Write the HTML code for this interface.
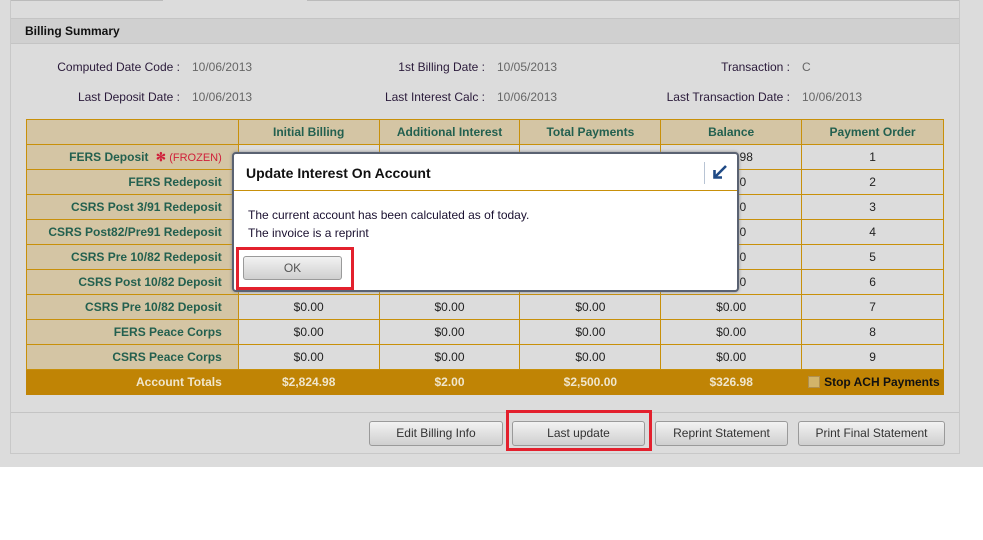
<!DOCTYPE html>
<html><head><style>
*{margin:0;padding:0;box-sizing:border-box}
body{width:983px;height:540px;background:#fff;font-family:"Liberation Sans",Arial,sans-serif;font-size:12px;position:relative;overflow:hidden}
.bg{position:absolute;left:0;top:0;width:983px;height:467px;background:#dcdcdc}
.panel{position:absolute;left:10px;top:0;width:950px;height:454px;border:1px solid #c8c8c8;border-top:none}
.a{position:absolute;white-space:nowrap}
.lbl{color:#2a1a3a;text-align:right}
.val{color:#666}
table{position:absolute;left:26px;top:119px;border-collapse:collapse;width:918px}
td{border:1px solid #c8900a;height:25px;text-align:center;color:#222;font-size:12px;padding:0}
tr.h td{background:#d4c5a4;color:#23604f;font-weight:bold}
td.n{background:#d4c5a4;color:#23604f;font-weight:bold;text-align:right;padding-right:16px}
tr.t td{background:#c08405;color:#f0e6cc;font-weight:bold;border-color:#c08405}
.btn{position:absolute;top:421px;height:25px;border:1px solid #9a9a9a;border-radius:3px;background:linear-gradient(#f2f2f2,#cfcfcf);color:#333;font-size:12px;text-align:center;line-height:23px}
.red{position:absolute;border:3px solid #e3202d}
</style></head><body>
<div class="bg"></div>
<div style="position:absolute;left:10px;top:0;width:153px;height:1px;background:#bbb"></div>
<div style="position:absolute;left:307px;top:0;width:653px;height:1px;background:#bbb"></div>
<div class="panel"></div>
<div style="position:absolute;left:11px;top:18px;width:948px;height:26px;background:#d0d0d0;border-top:1px solid #c4c4c4;border-bottom:1px solid #c4c4c4"></div>
<div class="a" style="left:25px;top:24px;font-weight:bold;color:#111">Billing Summary</div>

<div class="a lbl" style="right:803px;top:60px">Computed Date Code :</div>
<div class="a val" style="left:192px;top:60px">10/06/2013</div>
<div class="a lbl" style="right:498px;top:60px">1st Billing Date :</div>
<div class="a val" style="left:497px;top:60px">10/05/2013</div>
<div class="a lbl" style="right:193px;top:60px">Transaction :</div>
<div class="a val" style="left:802px;top:60px">C</div>
<div class="a lbl" style="right:803px;top:90px">Last Deposit Date :</div>
<div class="a val" style="left:192px;top:90px">10/06/2013</div>
<div class="a lbl" style="right:498px;top:90px">Last Interest Calc :</div>
<div class="a val" style="left:497px;top:90px">10/06/2013</div>
<div class="a lbl" style="right:193px;top:90px">Last Transaction Date :</div>
<div class="a val" style="left:802px;top:90px">10/06/2013</div>

<table>
<colgroup><col style="width:212px"><col style="width:141px"><col style="width:141px"><col style="width:141px"><col style="width:141px"><col style="width:142px"></colgroup>
<tr class="h"><td></td><td>Initial Billing</td><td>Additional Interest</td><td>Total Payments</td><td>Balance</td><td>Payment Order</td></tr>
<tr><td class="n">FERS Deposit <span style="color:#d0203a;font-weight:bold;margin-left:4px">✻</span> <span style="color:#d0203a;font-size:11px;font-weight:normal">(FROZEN)</span></td><td>$2,824.98</td><td>$2.00</td><td>$2,500.00</td><td>$326.98</td><td>1</td></tr>
<tr><td class="n">FERS Redeposit</td><td>$0.00</td><td>$0.00</td><td>$0.00</td><td>$0.00</td><td>2</td></tr>
<tr><td class="n">CSRS Post 3/91 Redeposit</td><td>$0.00</td><td>$0.00</td><td>$0.00</td><td>$0.00</td><td>3</td></tr>
<tr><td class="n">CSRS Post82/Pre91 Redeposit</td><td>$0.00</td><td>$0.00</td><td>$0.00</td><td>$0.00</td><td>4</td></tr>
<tr><td class="n">CSRS Pre 10/82 Redeposit</td><td>$0.00</td><td>$0.00</td><td>$0.00</td><td>$0.00</td><td>5</td></tr>
<tr><td class="n">CSRS Post 10/82 Deposit</td><td>$0.00</td><td>$0.00</td><td>$0.00</td><td>$0.00</td><td>6</td></tr>
<tr><td class="n">CSRS Pre 10/82 Deposit</td><td>$0.00</td><td>$0.00</td><td>$0.00</td><td>$0.00</td><td>7</td></tr>
<tr><td class="n">FERS Peace Corps</td><td>$0.00</td><td>$0.00</td><td>$0.00</td><td>$0.00</td><td>8</td></tr>
<tr><td class="n">CSRS Peace Corps</td><td>$0.00</td><td>$0.00</td><td>$0.00</td><td>$0.00</td><td>9</td></tr>
<tr class="t"><td style="text-align:right;padding-right:16px">Account Totals</td><td>$2,824.98</td><td>$2.00</td><td>$2,500.00</td><td>$326.98</td><td style="text-align:left;padding-left:6px;color:#111"><span style="display:inline-block;width:12px;height:12px;background:#d2b46a;border:1px solid #b09050;vertical-align:-2px;margin-right:4px"></span>Stop ACH Payments</td></tr>
</table>

<div style="position:absolute;left:11px;top:412px;width:948px;height:1px;background:#c4c4c4"></div>
<div class="btn" style="left:369px;width:134px">Edit Billing Info</div>
<div class="btn" style="left:512px;width:133px">Last update</div>
<div class="btn" style="left:655px;width:133px">Reprint Statement</div>
<div class="btn" style="left:798px;width:147px">Print Final Statement</div>
<div class="red" style="left:506px;top:410px;width:146px;height:41px"></div>

<div style="position:absolute;left:232px;top:152px;width:507px;height:140px;background:#fff;border:2px solid #5a6272;border-radius:4px;box-shadow:0 0 3px #888">
  <div style="position:absolute;left:0;top:36px;width:503px;height:1px;background:#c8900a"></div>
  <div class="a" style="left:12px;top:11px;font-size:14px;font-weight:bold;color:#111">Update Interest On Account</div>
  <div style="position:absolute;left:470px;top:8px;width:1px;height:22px;background:#b8c4d4"></div>
  <svg style="position:absolute;left:478px;top:10px" width="16" height="16" viewBox="0 0 16 16"><path d="M14 2 L3.5 12.5" stroke="#1f4a85" stroke-width="2.6" fill="none"/><path d="M2.5 6 L2.5 13.5 L10 13.5" stroke="#1f4a85" stroke-width="2.6" fill="none"/></svg>
  <div class="a" style="left:14px;top:54px;color:#1a1030">The current account has been calculated as of today.</div>
  <div class="a" style="left:14px;top:72px;color:#1a1030">The invoice is a reprint</div>
  <div class="btn" style="left:9px;top:102px;width:99px;height:24px;line-height:22px;color:#555">OK</div>
</div>
<div class="red" style="left:236px;top:247px;width:118px;height:43px"></div>
</body></html>
